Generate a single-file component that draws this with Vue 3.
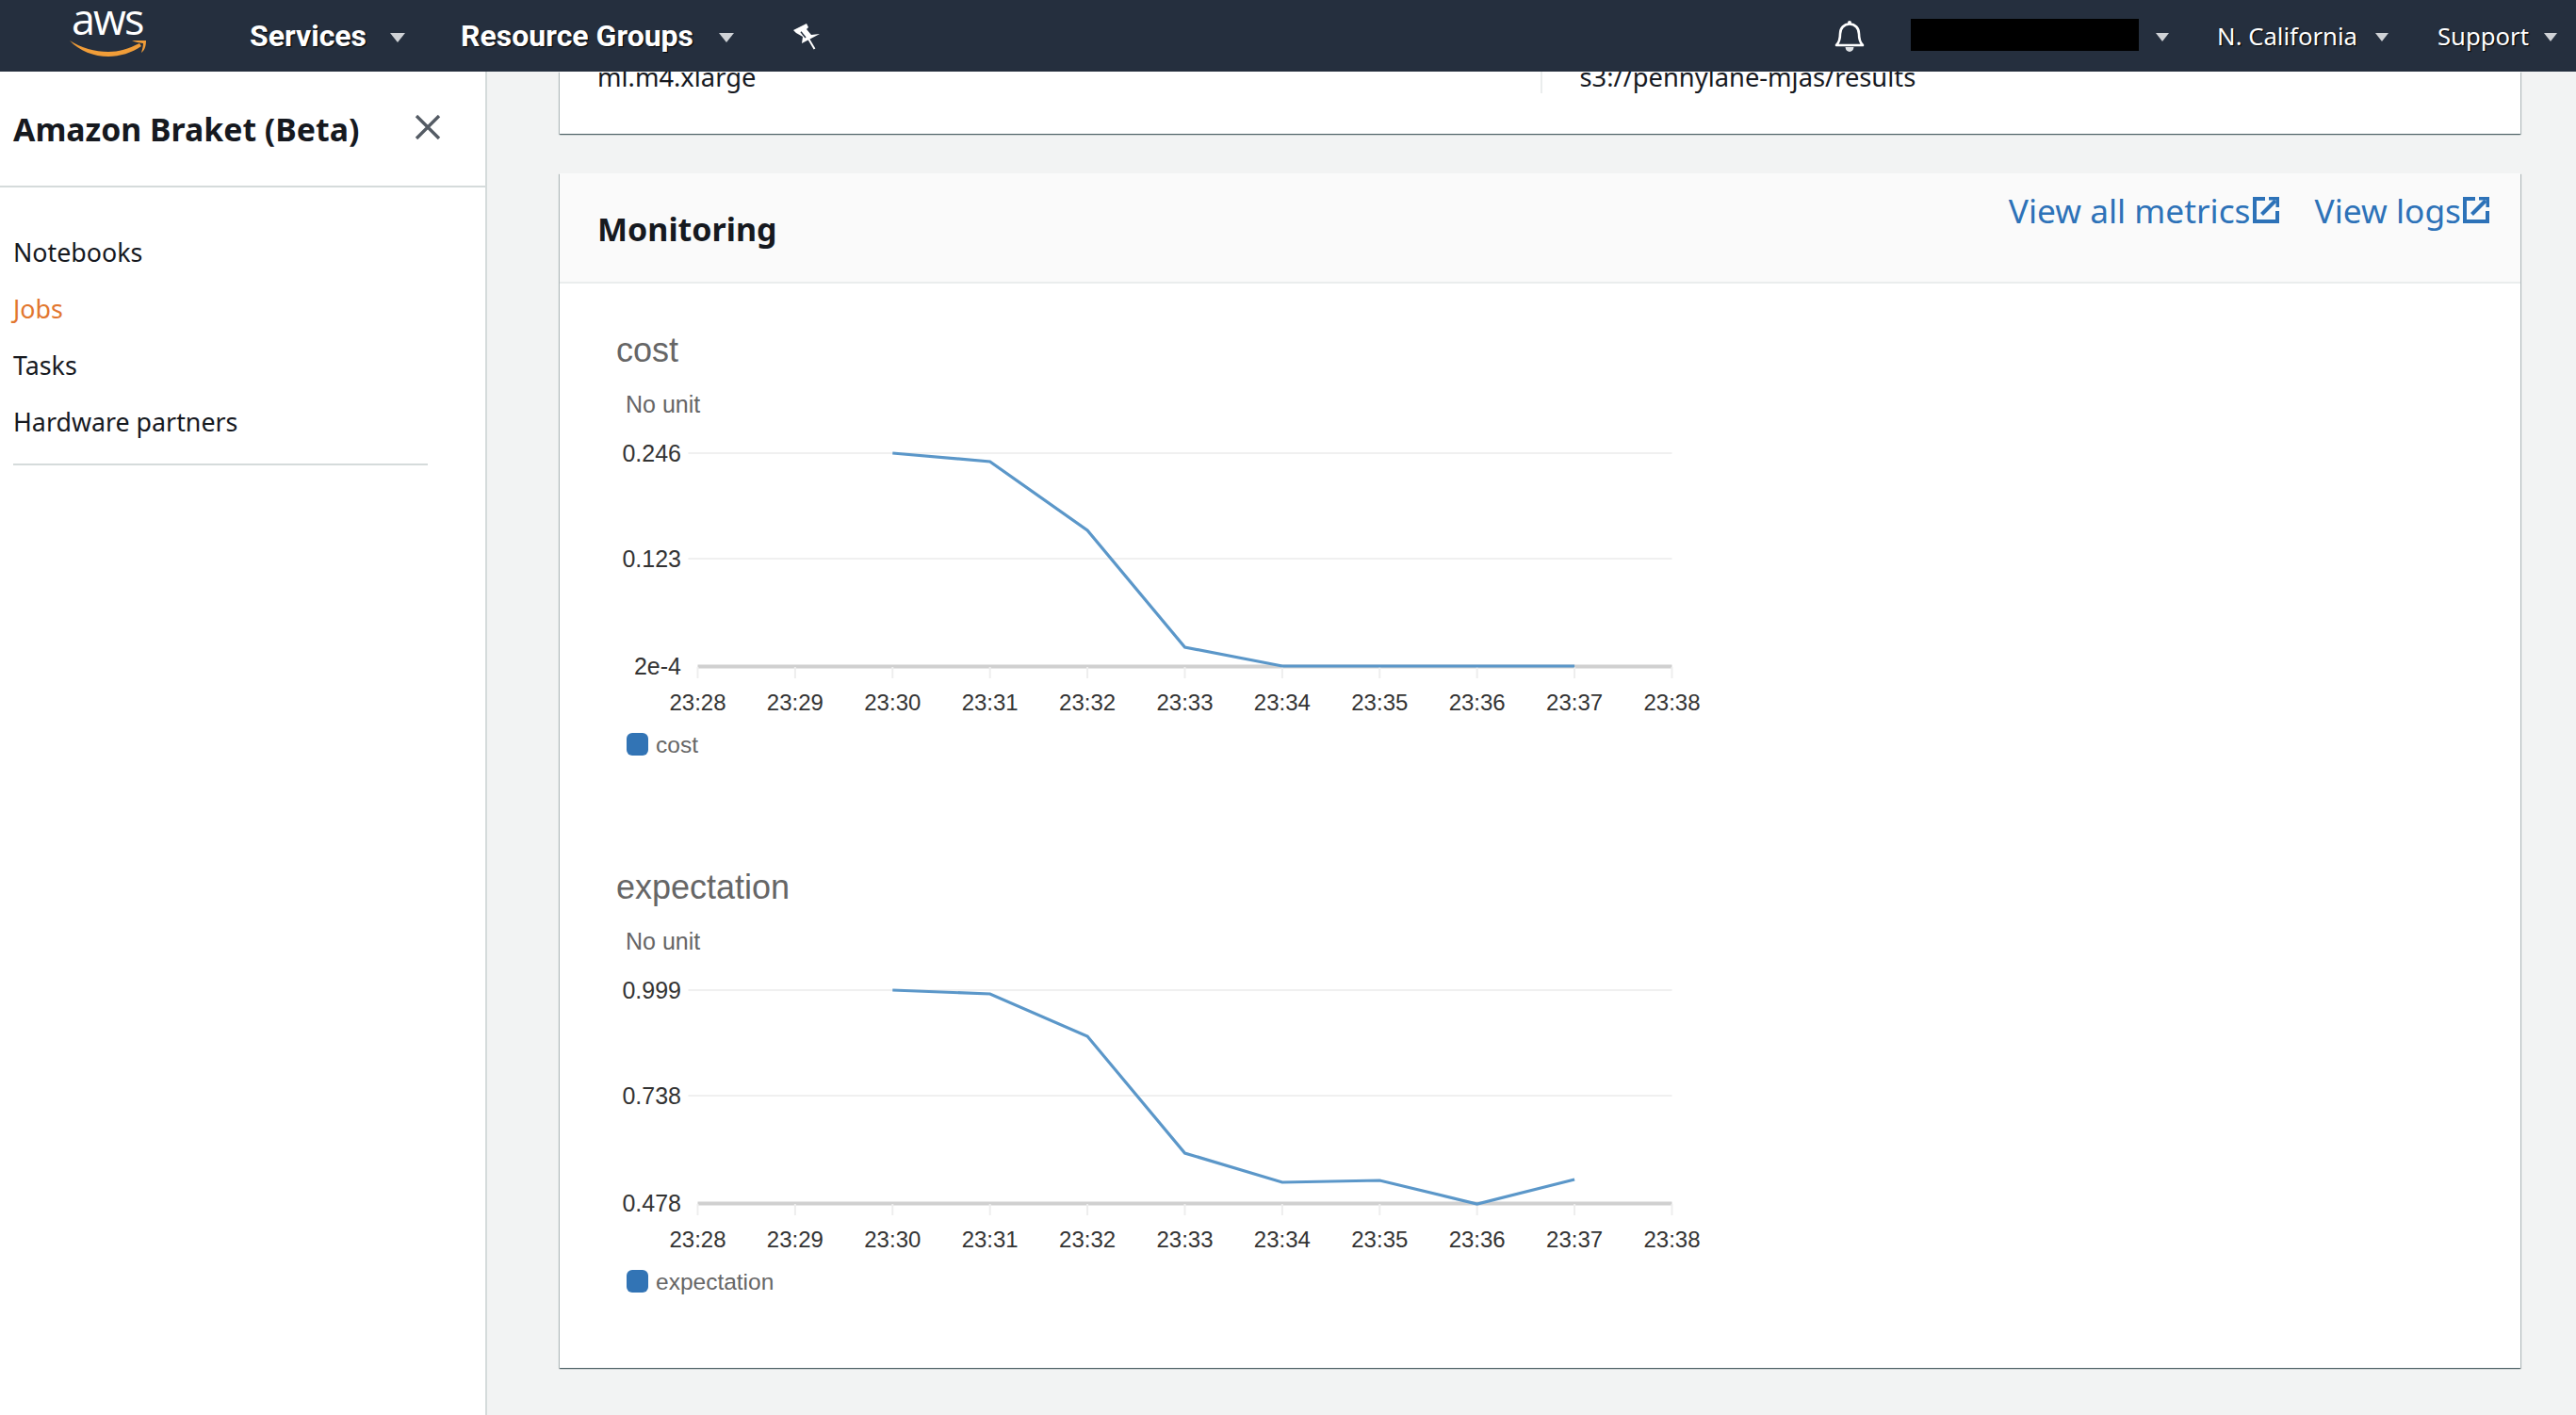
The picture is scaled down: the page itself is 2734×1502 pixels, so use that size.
<script setup>
const xLabels = ['23:28','23:29','23:30','23:31','23:32','23:33','23:34','23:35','23:36','23:37','23:38']
const x0 = 146.5, dx = 103.4
const tickX = xLabels.map((_, i) => x0 + i * dx)
const charts = [
  { title: 'cost', yl: ['0.246','0.123','2e-4'], pts: [481,490,563,687,707,707,707,707] },
  { title: 'expectation', yl: ['0.999','0.738','0.478'], pts: [481,485,530,654,685,683,708,682] },
]
function points(c) {
  return c.pts.map((y, i) => `${x0 + (i + 2) * dx},${y - 342}`).join(' ')
}
const navItems = ['Notebooks', 'Jobs', 'Tasks', 'Hardware partners']
</script>

<template>
  <div class="page">
    <header class="top">
      <div class="logo">
        <span class="aws">aws</span>
        <svg class="smile" width="90" height="24" viewBox="0 0 90 24">
          <path d="M4 3C16 11 31 15 45 15C56 15 66 12 78 6L80 9C70 16 57 20 45 20C30 20 14 14 4 3Z" fill="#f19d38" />
          <path d="M70 3L85 3C85 8 84 13 80 16C81 12 82 9 82 6C78 5 74 5 70 3Z" fill="#f19d38" />
        </svg>
      </div>
      <span class="nav bold nav-services">Services</span><i class="caret big c1"></i>
      <span class="nav bold nav-groups">Resource Groups</span><i class="caret big c2"></i>
      <svg class="pin" width="32" height="32" viewBox="0 0 32 32">
        <path d="M2 10L16 3L18 7L16 9L21 15L30 14L11 24L12 17L5 13Z" fill="#fff" />
        <path d="M18 19L24.5 30" stroke="#fff" stroke-width="2" />
        <path d="M10 11.7L15 18" stroke="#252f3e" stroke-width="1.4" />
      </svg>
      <div class="spacer"></div>
      <svg class="bell" width="34" height="36" viewBox="0 0 34 36">
        <path d="M3 27C7 23 7 19 7 15C7 9 11 4.5 17 4.5C23 4.5 27 9 27 15C27 19 27 23 31 27Z" fill="none" stroke="#fff" stroke-width="2.6" stroke-linejoin="round" />
        <circle cx="17" cy="3" r="2" fill="#fff" />
        <path d="M12.5 29C13 35.500 21 35.500 21.500 29Z" fill="#dfe2e6" />
      </svg>
      <div class="mask"></div><i class="caret c3"></i>
      <span class="nav region">N. California</span><i class="caret c4"></i>
      <span class="nav support">Support</span><i class="caret c5"></i>
    </header>

    <div class="body">
      <aside class="side">
        <div class="side-head">
          <span class="side-title">Amazon Braket (Beta)</span>
          <svg width="28" height="26" viewBox="0 0 28 26" class="close">
            <path d="M2 1L26 25M26 1L2 25" stroke="#545b64" stroke-width="3.4" fill="none" />
          </svg>
        </div>
        <ul class="menu">
          <li v-for="n in navItems" :key="n" :class="{ active: n === 'Jobs' }">{{ n }}</li>
        </ul>
        <div class="rule"></div>
      </aside>

      <main class="main">
        <section class="card first">
          <div class="kv">
            <div class="kv-cell">ml.m4.xlarge</div>
            <div class="kv-cell second">s3://pennylane-mjas/results</div>
          </div>
        </section>

        <section class="card second-card">
          <div class="card-head">
            <h2>Monitoring</h2>
            <div class="links">
              <a>View all metrics<svg class="ext" width="28" height="28" viewBox="0 0 28 28"><path d="M13 2H2V26H26V15" fill="none" stroke="#2d72b8" stroke-width="4"/><path d="M9.500 18.500L24 4" stroke="#2d72b8" stroke-width="4"/><path d="M17 0H28V11H24.500V3.500H17Z" fill="#2d72b8"/></svg></a>
              <a>View logs<svg class="ext" width="28" height="28" viewBox="0 0 28 28"><path d="M13 2H2V26H26V15" fill="none" stroke="#2d72b8" stroke-width="4"/><path d="M9.500 18.500L24 4" stroke="#2d72b8" stroke-width="4"/><path d="M17 0H28V11H24.500V3.500H17Z" fill="#2d72b8"/></svg></a>
            </div>
          </div>
          <div class="charts">
            <svg v-for="c in charts" :key="c.title" class="chart" width="1240" height="570" viewBox="0 0 1240 570">
              <text x="60" y="42" class="t-title">{{ c.title }}</text>
              <text x="70" y="96" class="t-unit">No unit</text>
              <line :x1="x0 - 10" y1="139" :x2="x0 + 10 * dx" y2="139" stroke="#f0f0f0" stroke-width="2" />
              <line :x1="x0 - 10" y1="251" :x2="x0 + 10 * dx" y2="251" stroke="#f0f0f0" stroke-width="2" />
              <line :x1="x0" y1="365.500" :x2="x0 + 10 * dx" y2="365.500" stroke="#d0d0d0" stroke-width="4" />
              <line v-for="x in tickX" :key="x" :x1="x" y1="366" :x2="x" y2="378" stroke="#eeeeee" stroke-width="2" />
              <text x="129" y="148" class="t-y">{{ c.yl[0] }}</text>
              <text x="129" y="260" class="t-y">{{ c.yl[1] }}</text>
              <text x="129" y="374" class="t-y">{{ c.yl[2] }}</text>
              <text v-for="(l, i) in xLabels" :key="l" :x="x0 + i * dx" y="412" class="t-x">{{ l }}</text>
              <polyline :points="points(c)" fill="none" stroke="#5b97c9" stroke-width="3.200" />
              <rect x="71" y="436" width="23" height="24" rx="6" fill="#3274b5" />
              <text x="102" y="457" class="t-leg">{{ c.title }}</text>
            </svg>
          </div>
        </section>
      </main>
    </div>
  </div>
</template>

<style>
html, body { margin: 0; padding: 0; background: #f2f3f3; }
</style>

<style scoped>
.page { width: 2734px; height: 1502px; display: flex; flex-direction: column; overflow: hidden; font-family: "Noto Sans", sans-serif; color: #16191f; }
.top { height: 76px; flex: none; background: #252f3e; display: flex; align-items: center; color: #fff; position: relative; z-index: 2; }
.logo { width: 76px; margin-left: 78px; position: relative; height: 76px; flex: none; }
.aws { position: absolute; left: -2px; top: 0; font: 400 45px/40px "Open Sans", sans-serif; letter-spacing: -2px; color: #fff; }
.smile { position: absolute; left: -8px; top: 40px; }
.nav { font-size: 25.700px; font-family: "Noto Sans", sans-serif; text-shadow: 1px 1px 1px #000; white-space: nowrap; }
.bold { font-family: Roboto, sans-serif; font-weight: 700; font-size: 32px; }
.nav-services { margin-left: 111px; }
.caret { width: 0; height: 0; border-left: 7px solid transparent; border-right: 7px solid transparent; border-top: 9px solid #cfd2d6; margin-top: 3px; flex: none; }
.big { border-left-width: 8px; border-right-width: 8px; border-top-width: 10px; }
.c1 { margin-left: 25px; }
.nav-groups { margin-left: 59px; }
.c2 { margin-left: 27px; }
.pin { margin-left: 61px; flex: none; }
.spacer { flex: 1; }
.bell { margin-right: 48px; flex: none; margin-top: 2px; }
.mask { width: 242px; height: 34px; background: #000; flex: none; margin-top: -2px; }
.c3 { margin-left: 18px; }
.region { margin-left: 51px; }
.c4 { margin-left: 19px; }
.support { margin-left: 52px; }
.c5 { margin-left: 16px; margin-right: 20px; }

.body { flex: 1; display: flex; min-height: 0; }
.side { width: 515px; flex: none; background: #fff; border-right: 2px solid #d5dbdb; box-shadow: 1px 0 1px rgba(0,0,0,.08); }
.side-head { height: 121px; border-bottom: 2px solid #d5dbdb; display: flex; align-items: center; padding: 0 47px 0 14px; justify-content: space-between; }
.side-title { font-size: 33.800px; font-weight: 700; white-space: nowrap; }
.close { margin-top: -4px; }
.menu { list-style: none; margin: 39px 0 0; padding: 0 0 0 14px; font-size: 26.800px; line-height: 60px; }
.active { color: #e2772f; }
.rule { height: 2px; margin: 14px 61px 0 14px; background: #d5dbdb; }

.main { flex: 1; min-width: 0; overflow: hidden; padding: 0 59px 0 77px; background: #f2f3f3; }
.card { background: #fff; box-shadow: 0 1px 1px 0 rgba(0,28,36,.5), 1px 1px 1px 0 rgba(0,28,36,.2), -1px 1px 1px 0 rgba(0,28,36,.2); }
.first { height: 66px; overflow: hidden; display: flow-root; }
.kv { display: flex; font-size: 27.300px; line-height: 34px; margin-top: -11px; }
.kv-cell { width: 1041px; padding-left: 40px; box-sizing: border-box; white-space: nowrap; }
.second { border-left: 2px solid #eaeded; padding-left: 40px; }
.second-card { margin-top: 42px; height: 1268px; }
.card-head { height: 117px; box-sizing: border-box; background: #fafafa; border-bottom: 2px solid #eaeded; display: flex; justify-content: space-between; padding: 0 33px 0 40px; }
h2 { margin: 0; font-size: 34px; font-weight: 700; line-height: 116px; margin-top: 1px; }
.links { display: flex; gap: 38px; font-size: 35.300px; color: #2d72b8; padding-top: 14px; line-height: 50px; }
.links a { display: flex; align-items: center; height: 50px; white-space: nowrap; }
.ext { margin-left: 2px; flex: none; }
.charts { display: flex; flex-direction: column; padding-top: 41px; }
.chart { display: block; flex: none; }
text { font-family: "Liberation Sans", Arial, sans-serif; }
.t-title { font-size: 36px; fill: #666; }
.t-unit { font-size: 25px; fill: #666; }
.t-y { font-size: 25px; fill: #333; text-anchor: end; }
.t-x { font-size: 24px; fill: #333; text-anchor: middle; }
.t-leg { font-size: 24.500px; fill: #666; }
</style>
